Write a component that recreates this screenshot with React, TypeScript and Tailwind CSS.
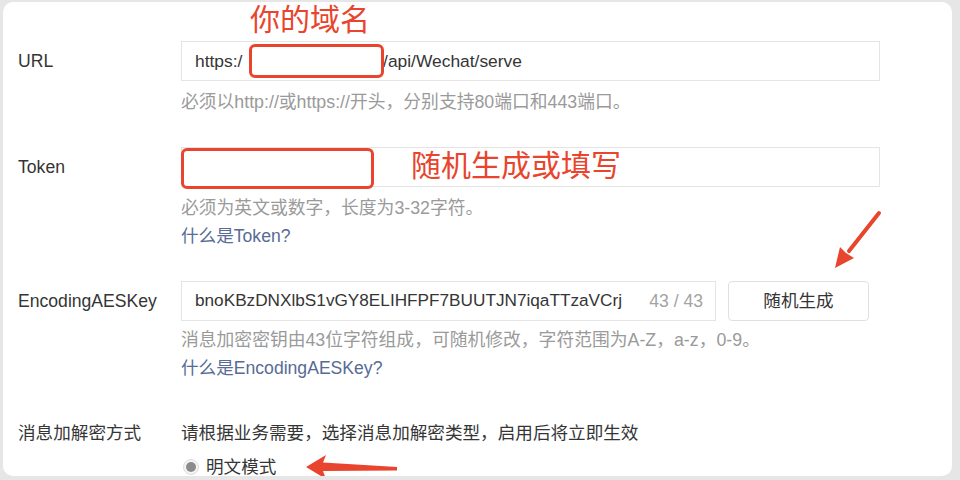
const font = { fontFamily: '"Liberation Sans", "Noto Sans CJK SC", sans-serif' };

function Label({ text, tall }: { text: string; tall?: boolean }) {
  return (
    <div className={`w-[178px] shrink-0 pl-[15px] flex items-center text-[#353535] ${tall ? 'h-[40px]' : 'h-[28px]'}`}>
      {text}
    </div>
  );
}

function Help({ children, className = '' }: { children: React.ReactNode; className?: string }) {
  return <p className={`leading-[28px] text-[17.8px] text-[#9a9a9a] ${className}`}>{children}</p>;
}

function Link({ children }: { children: React.ReactNode }) {
  return <p className="leading-[28px] text-[#576b95]">{children}</p>;
}

export default function App() {
  return (
    <div className="w-[960px] h-[480px] bg-[#e6e6e6] pt-[2px] pl-[3px] pr-[8px] pb-[4px] text-[17.6px]" style={font}>
      <div className="relative h-full bg-white rounded-[10px] overflow-hidden pt-[39px]">
        {/* URL */}
        <div className="flex">
          <Label text="URL" tall />
          <div className="w-[699px]">
            <div className="relative h-[40px] border border-[#e4e4e4] px-[13px] flex items-center text-[#353535] text-[17.4px] whitespace-nowrap">
              <span>https:/</span>
              <span className="inline-block w-[131px]" />
              <span>n/api/Wechat/serve</span>
              <div className="absolute left-[67px] top-[2px] w-[135px] h-[34px] border-[3px] border-[#e9442d] rounded-[6px] bg-white" />
              <div className="absolute left-[68px] top-[-38px] text-[30px] leading-[32px] text-[#e9442d]">你的域名</div>
            </div>
            <Help className="mt-[7px]">必须以http://或https://开头，分别支持80端口和443端口。</Help>
          </div>
        </div>

        {/* Token */}
        <div className="flex mt-[31px]">
          <Label text="Token" tall />
          <div className="w-[699px]">
            <div className="relative h-[40px] border border-[#e4e4e4]">
              <div className="absolute left-[-1px] top-0 w-[193px] h-[41px] border-[3px] border-[#e9442d] rounded-[6px] bg-white" />
              <div className="absolute left-[229px] top-[2px] text-[30px] leading-[32px] text-[#e9442d]">随机生成或填写</div>
            </div>
            <Help className="mt-[7px]">必须为英文或数字，长度为3-32字符。</Help>
            <Link>什么是Token?</Link>
          </div>
        </div>

        {/* EncodingAESKey */}
        <div className="flex mt-[31px]">
          <Label text="EncodingAESKey" tall />
          <div className="w-[720px]">
            <div className="flex gap-[12px]">
              <div className="w-[535px] h-[40px] border border-[#e4e4e4] pl-[13px] pr-[12px] flex items-center justify-between whitespace-nowrap">
                <span className="text-[#353535] text-[17.2px]">bnoKBzDNXlbS1vGY8ELIHFPF7BUUTJN7iqaTTzaVCrj</span>
                <span className="text-[#a3a3a3]">43 / 43</span>
              </div>
              <button className="w-[141px] h-[40px] border border-[#e0e0e0] rounded-[4px] bg-white text-[#353535]">
                随机生成
              </button>
            </div>
            <Help className="mt-[5px]">消息加密密钥由43位字符组成，可随机修改，字符范围为A-Z，a-z，0-9。</Help>
            <Link>什么是EncodingAESKey?</Link>
          </div>
        </div>

        {/* 消息加解密方式 */}
        <div className="flex mt-[37px]">
          <Label text="消息加解密方式" />
          <div>
            <p className="leading-[28px] text-[#353535]">请根据业务需要，选择消息加解密类型，启用后将立即生效</p>
            <div className="mt-[6px] flex items-center h-[28px] pl-[2px] gap-[7px] text-[#353535]">
              <span className="w-[16px] h-[16px] rounded-full border border-[#dcdcdc] bg-[#f4f4f4] flex items-center justify-center">
                <span className="w-[10px] h-[10px] rounded-full bg-[#8c8c8c]" />
              </span>
              <span>明文模式</span>
            </div>
          </div>
        </div>

        {/* annotation arrows */}
        <svg
          className="absolute inset-0 pointer-events-none"
          width="949"
          height="474"
          viewBox="3 2 949 474"
        >
          <line x1="879" y1="213" x2="849" y2="251" stroke="#e9442d" strokeWidth="4" strokeLinecap="round" />
          <polygon points="835,268 840,247 846,253 854,258" fill="#e9442d" />
          <polygon points="306,467 326,455 323,462.5 397,467 397,470.5 323,471 326,479" fill="#e9442d" />
        </svg>
      </div>
    </div>
  );
}
